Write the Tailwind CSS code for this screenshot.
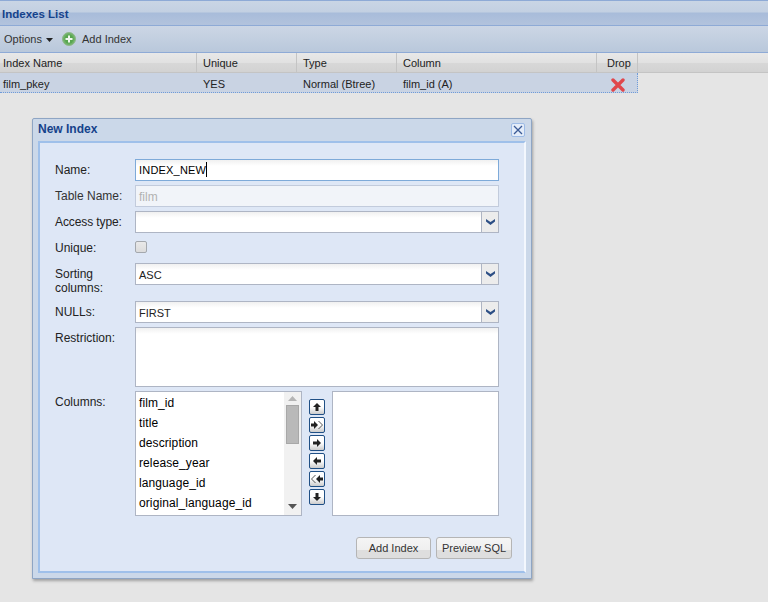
<!DOCTYPE html>
<html>
<head>
<meta charset="utf-8">
<script src="https://cdn.jsdelivr.net/npm/@tailwindcss/browser@4"></script>
</head>
<body class="w-[768px] h-[602px] overflow-hidden relative bg-[#e5e5e5] font-['Liberation_Sans',Arial,sans-serif] text-[12px] text-[#222]">
  <!-- Title bar -->
  <div class="h-[26px] border-t border-b border-[#8eaad6] bg-[linear-gradient(#c9d5e5_0,#c3d0e2_11px,#a8bcda_12px,#b3c3dd_25px)] relative">
    <div class="pl-[2px] pt-[5px] font-bold text-[11.5px] text-[#15428b] leading-[17px]">Indexes List</div>
  </div>
  <!-- Toolbar -->
  <div class="h-[27px] border-b border-[#8eaad6] bg-[linear-gradient(#ccd6e5,#b9c8db)] flex items-center pl-[4px] text-[#333] text-[11px]">
    <span class="w-[38px]">Options</span>
    <svg width="7" height="4" class="ml-[4px] mt-[1px]"><path d="M0 0h7L3.5 4z" fill="#222"/></svg>
    <svg width="14" height="14" viewBox="0 0 14 14" class="ml-[9px]">
      <circle cx="7" cy="7" r="6.5" fill="#6fb267" stroke="#8fb68a"/>
      <circle cx="7" cy="7" r="4.5" fill="#58a650"/>
      <path d="M7 3.5v7M3.500 7h7" stroke="#f0f7ee" stroke-width="2"/>
    </svg>
    <span class="ml-[6px]">Add Index</span>
  </div>
  <!-- Table header -->
  <div class="h-[20px] flex bg-[linear-gradient(#e8e8e8,#e1e1e1_50%,#d8d8d8_50%,#d2d2d2)] border-b border-[#c4c4c4] leading-[21px] text-[11px]">
    <div class="w-[197px] pl-[3px] border-r border-[#c4c4c4]">Index Name</div>
    <div class="w-[100px] pl-[6px] border-r border-[#c4c4c4]">Unique</div>
    <div class="w-[100px] pl-[6px] border-r border-[#c4c4c4]">Type</div>
    <div class="w-[200px] pl-[6px] border-r border-[#c4c4c4]">Column</div>
    <div class="w-[41px] pl-[10px] border-r border-[#c4c4c4]">Drop</div>
  </div>
  <!-- Table row -->
  <div class="w-[638px] h-[20px] flex bg-[#c9d3e3] border-b border-r border-dotted border-[#6f9bd8] leading-[22px] text-[11px]">
    <div class="w-[197px] pl-[3px]">film_pkey</div>
    <div class="w-[100px] pl-[6px]">YES</div>
    <div class="w-[100px] pl-[6px]">Normal (Btree)</div>
    <div class="w-[200px] pl-[6px]">film_id (A)</div>
    <div class="w-[40px] flex items-center justify-center pt-[4px] pl-[2px]">
      <svg width="14" height="14" viewBox="0 0 14 14"><path d="M2 2l10 10M12 2L2 12" stroke="#e0474c" stroke-width="3.4" stroke-linecap="round"/></svg>
    </div>
  </div>

  <!-- Window -->
  <div class="absolute left-[32px] top-[118px] w-[500px] h-[461px] border border-[#8ea5c4] rounded-tl-[2px] rounded-tr-[2px] bg-[#cbd8e9] shadow-[1px_2px_3px_rgba(0,0,0,0.3)] px-[5px] pb-[5px] flex flex-col">
    <div class="h-[22px] shrink-0 flex items-center justify-between">
      <span class="font-bold text-[12px] text-[#15428b] leading-[14px] mb-[2px]">New Index</span>
      <div class="w-[14px] h-[14px] rounded-[2px] border border-[#9dbbe6] bg-[#e3ecf9] flex items-center justify-center mr-[1px]">
        <svg width="10" height="10" viewBox="0 0 10 10"><path d="M1 1l8 8M9 1L1 9" stroke="#3a5a95" stroke-width="1.3"/></svg>
      </div>
    </div>
    <div class="flex-1 border-2 border-[#9fc0ea] border-r-[#f3f7fd] border-b-[#9fc0ea] bg-[#dee7f6] relative pl-[15px] pt-[16px] text-[#222]">
      <!-- Name -->
      <div class="flex h-[22px] mb-[4px]">
        <label class="w-[80px] pt-[4px] leading-[14px]">Name:</label>
        <div class="w-[364px] border border-[#7eaad9] bg-[linear-gradient(#f0f0f0,#fff_6px)] pl-[3px] leading-[21px] text-black text-[11px] tracking-[0.2px]">INDEX_NEW<span class="inline-block w-px h-[15px] bg-black align-[-3px]"></span></div>
      </div>
      <!-- Table Name -->
      <div class="flex h-[22px] mb-[4px]">
        <label class="w-[80px] pt-[4px] leading-[14px] text-[#333]">Table Name:</label>
        <div class="w-[364px] border border-[#c2cbdc] bg-[#f1f4f9] pl-[3px] leading-[22px] text-[#b2b2b2]">film</div>
      </div>
      <!-- Access -->
      <div class="flex h-[22px] mb-[8px]">
        <label class="w-[80px] pt-[4px] leading-[14px] tracking-[-0.1px]">Access type:</label>
        <div class="w-[364px] border border-[#aeb5c4] bg-[linear-gradient(#f0f0f0,#fff_6px)] flex justify-between">
          <span class="pl-[3px] leading-[20px]"></span>
          <div class="w-[17px] border-l border-[#aeb5c4] bg-[#ececec] flex items-center justify-center">
            <svg width="9" height="6" viewBox="0 0 9 6"><path d="M0 0l4.500 3L9 0v2.500L4.500 6 0 2.500z" fill="#2d4f85"/></svg>
          </div>
        </div>
      </div>
      <!-- Unique -->
      <div class="flex h-[12px] mb-[10px] items-center">
        <label class="w-[80px] leading-[14px] pt-[1px]">Unique:</label>
        <div class="w-[12px] h-[12px] rounded-[2px] border border-[#a4a8ad] bg-[linear-gradient(#e9e9e9,#dcdcdc)]"></div>
      </div>
      <!-- Sorting -->
      <div class="flex h-[22px] mb-[16px]">
        <label class="w-[80px] pt-[4px] leading-[14px]">Sorting<br>columns:</label>
        <div class="w-[364px] border border-[#aeb5c4] bg-[linear-gradient(#f0f0f0,#fff_6px)] flex justify-between">
          <span class="pl-[3px] leading-[22px] text-[11px]">ASC</span>
          <div class="w-[17px] border-l border-[#aeb5c4] bg-[#ececec] flex items-center justify-center">
            <svg width="9" height="6" viewBox="0 0 9 6"><path d="M0 0l4.500 3L9 0v2.500L4.500 6 0 2.500z" fill="#2d4f85"/></svg>
          </div>
        </div>
      </div>
      <!-- NULLs -->
      <div class="flex h-[22px] mb-[4px]">
        <label class="w-[80px] pt-[4px] leading-[14px]">NULLs:</label>
        <div class="w-[364px] border border-[#aeb5c4] bg-[linear-gradient(#f0f0f0,#fff_6px)] flex justify-between">
          <span class="pl-[3px] leading-[22px] text-[11px]">FIRST</span>
          <div class="w-[17px] border-l border-[#aeb5c4] bg-[#ececec] flex items-center justify-center">
            <svg width="9" height="6" viewBox="0 0 9 6"><path d="M0 0l4.500 3L9 0v2.500L4.500 6 0 2.500z" fill="#2d4f85"/></svg>
          </div>
        </div>
      </div>
      <!-- Restriction -->
      <div class="flex h-[60px] mb-[4px]">
        <label class="w-[80px] pt-[4px] leading-[14px]">Restriction:</label>
        <div class="w-[364px] border border-[#aeb5c4] bg-[linear-gradient(#f0f0f0,#fff_6px)]"></div>
      </div>
      <!-- Columns -->
      <div class="flex h-[125px]">
        <label class="w-[80px] pt-[4px] leading-[14px]">Columns:</label>
        <div class="w-[167px] border border-[#aeb5c4] bg-white flex">
          <div class="w-[148px] pl-[3px] pt-[1px] leading-[20px] text-black overflow-hidden tracking-[0.1px]">
            <div>film_id</div>
            <div>title</div>
            <div>description</div>
            <div>release_year</div>
            <div>language_id</div>
            <div>original_language_id</div>
          </div>
          <div class="w-[17px] bg-[#f1f1f1] flex flex-col items-center">
            <svg width="9" height="5" class="mt-[4px] shrink-0"><path d="M4.500 0L9 5H0z" fill="#b5b5b5"/></svg>
            <div class="w-[13px] h-[39px] mt-[4px] bg-[#b9b9b9] border border-[#a8a8a8]"></div>
            <svg width="9" height="5" class="mt-auto mb-[6px] shrink-0"><path d="M0 0h9L4.500 5z" fill="#555"/></svg>
          </div>
        </div>
        <div class="w-[30px] pl-[7px] pt-[8px] flex flex-col gap-[2px]">
          <div class="w-[16px] h-[16px] rounded-[2px] border border-[#1f4f85] bg-[linear-gradient(#fff_50%,#ccc)] flex items-center justify-center"><svg width="10" height="10" viewBox="0 0 10 10"><path d="M5 1l4 4H6.500v4h-3V5H1z" fill="#222"/></svg></div>
          <div class="w-[16px] h-[16px] rounded-[2px] border border-[#1f4f85] bg-[linear-gradient(#fff_50%,#ccc)] flex items-center justify-center"><svg width="12" height="10" viewBox="0 0 12 10"><path d="M0 3.500h3V1l4 4-4 4V6.500H0z" fill="#222"/><path d="M7.500 1l4 4-4 4" fill="none" stroke="#555"/></svg></div>
          <div class="w-[16px] h-[16px] rounded-[2px] border border-[#1f4f85] bg-[linear-gradient(#fff_50%,#ccc)] flex items-center justify-center"><svg width="10" height="10" viewBox="0 0 10 10"><path d="M1 3.500h4V1l4 4-4 4V6.500H1z" fill="#222"/></svg></div>
          <div class="w-[16px] h-[16px] rounded-[2px] border border-[#1f4f85] bg-[linear-gradient(#fff_50%,#ccc)] flex items-center justify-center"><svg width="10" height="10" viewBox="0 0 10 10"><path d="M9 3.500H5V1L1 5l4 4V6.500h4z" fill="#222"/></svg></div>
          <div class="w-[16px] h-[16px] rounded-[2px] border border-[#1f4f85] bg-[linear-gradient(#fff_50%,#ccc)] flex items-center justify-center"><svg width="12" height="10" viewBox="0 0 12 10"><path d="M12 3.500H9V1L5 5l4 4V6.500h3z" fill="#222"/><path d="M4.500 1l-4 4 4 4" fill="none" stroke="#555"/></svg></div>
          <div class="w-[16px] h-[16px] rounded-[2px] border border-[#1f4f85] bg-[linear-gradient(#fff_50%,#ccc)] flex items-center justify-center"><svg width="10" height="10" viewBox="0 0 10 10"><path d="M3.500 1h3v4H9L5 9 1 5h2.500z" fill="#222"/></svg></div>
        </div>
        <div class="w-[167px] border border-[#aeb5c4] bg-white"></div>
      </div>
      <!-- Buttons -->
      <div class="flex justify-end gap-[5px] pr-[12px] mt-[21px] text-[11px]">
        <div class="w-[75px] h-[22px] rounded-[3px] border border-[#b5b5b5] bg-[linear-gradient(#f5f5f5_0,#efefef_60%,#dedede_60%,#dedede)] text-center leading-[21px] text-[#333]">Add Index</div>
        <div class="w-[76px] h-[22px] rounded-[3px] border border-[#b5b5b5] bg-[linear-gradient(#f5f5f5_0,#efefef_60%,#dedede_60%,#dedede)] text-center leading-[21px] text-[#333]">Preview SQL</div>
      </div>
    </div>
  </div>
</body>
</html>
